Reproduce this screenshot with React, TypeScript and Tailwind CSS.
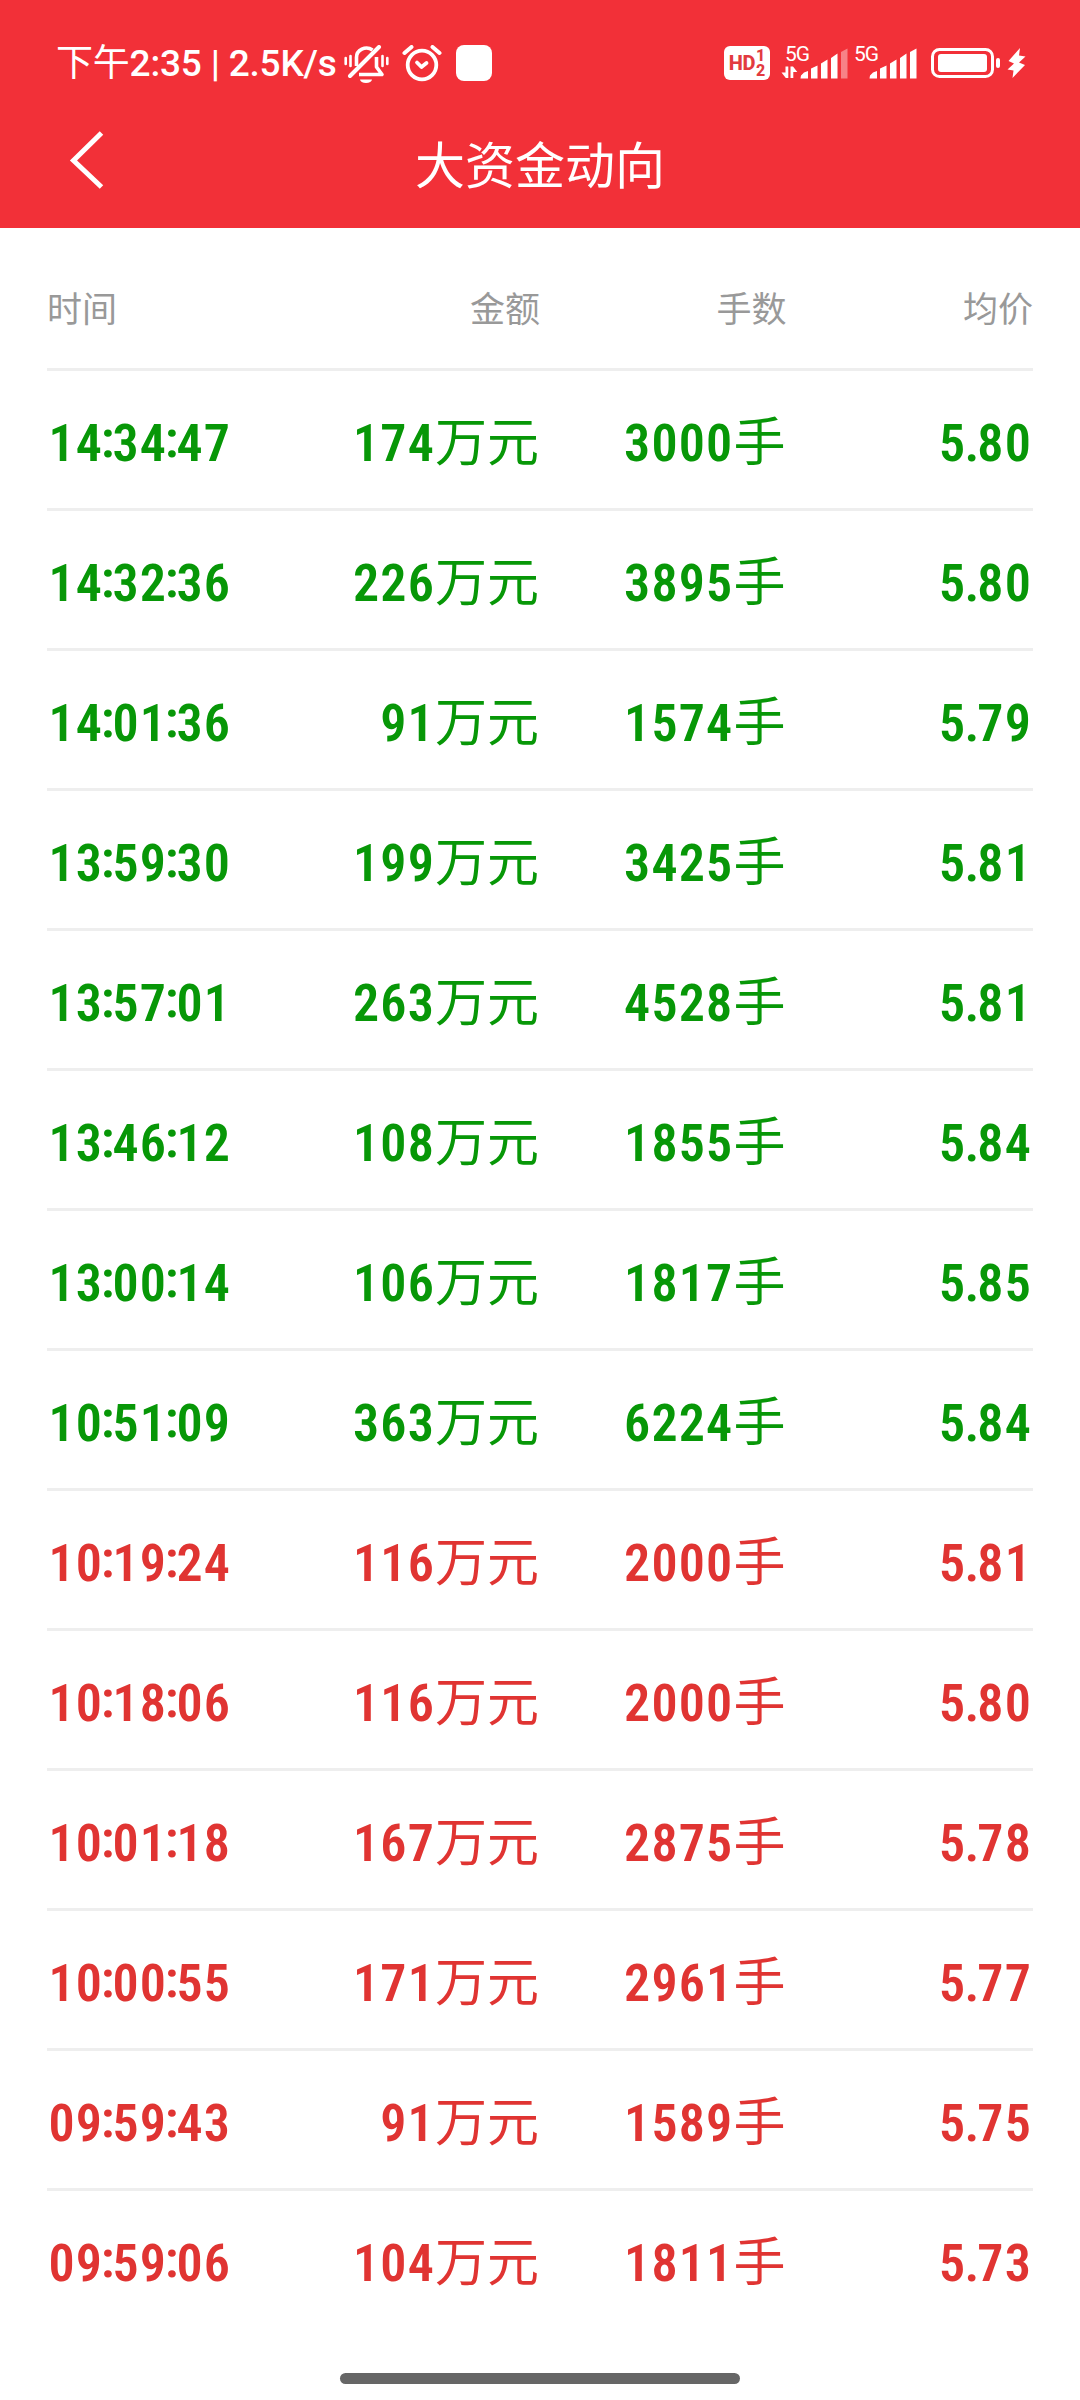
import clsx from "clsx";

interface Trade {
  time: string;
  amount: number;
  lots: number;
  price: string;
  side: "buy" | "sell";
}

const TRADES: Trade[] = [
  { time: "14:34:47", amount: 174, lots: 3000, price: "5.80", side: "sell" },
  { time: "14:32:36", amount: 226, lots: 3895, price: "5.80", side: "sell" },
  { time: "14:01:36", amount: 91, lots: 1574, price: "5.79", side: "sell" },
  { time: "13:59:30", amount: 199, lots: 3425, price: "5.81", side: "sell" },
  { time: "13:57:01", amount: 263, lots: 4528, price: "5.81", side: "sell" },
  { time: "13:46:12", amount: 108, lots: 1855, price: "5.84", side: "sell" },
  { time: "13:00:14", amount: 106, lots: 1817, price: "5.85", side: "sell" },
  { time: "10:51:09", amount: 363, lots: 6224, price: "5.84", side: "sell" },
  { time: "10:19:24", amount: 116, lots: 2000, price: "5.81", side: "buy" },
  { time: "10:18:06", amount: 116, lots: 2000, price: "5.80", side: "buy" },
  { time: "10:01:18", amount: 167, lots: 2875, price: "5.78", side: "buy" },
  { time: "10:00:55", amount: 171, lots: 2961, price: "5.77", side: "buy" },
  { time: "09:59:43", amount: 91, lots: 1589, price: "5.75", side: "buy" },
  { time: "09:59:06", amount: 104, lots: 1811, price: "5.73", side: "buy" },
];

const COLUMNS = ["时间", "金额", "手数", "均价"];

function MutedBellIcon() {
  return (
    <svg width="45" height="39" viewBox="0 0 45 39" fill="none" stroke="#fff" strokeWidth="3.6">
      <path d="M12.500 21V13a10 9.500 0 0 1 16-8" />
      <path d="M32.500 12v10l5.500 7.500H15" strokeLinejoin="round" />
      <path d="M6 31 35 2" strokeLinecap="round" strokeWidth="4" />
      <path d="M16 34.500h12a6 3.500 0 0 1-12 0Z" fill="#fff" stroke="none" />
      <path d="M1.700 13v6M6.500 11v10M38.500 11v10M43.300 13v6" strokeWidth="2.600" strokeLinecap="round" />
    </svg>
  );
}

function AlarmIcon() {
  return (
    <svg width="40" height="37" viewBox="0 0 40 37" fill="none" stroke="#fff" strokeLinecap="round">
      <circle cx="20" cy="20" r="14.300" strokeWidth="3.800" />
      <path d="m2.500 8 7-6M37.500 8l-7-6" strokeWidth="4" />
      <path d="m15 17.500 4.500 4.500 5-4" strokeWidth="3.800" strokeLinejoin="round" />
    </svg>
  );
}

function HdBadge() {
  return (
    <div className="flex h-[34px] w-[46px] items-center justify-center gap-px rounded-[6px] bg-white font-['Roboto',sans-serif] font-extrabold text-[#e23a40]">
      <span className="text-[20px] leading-none tracking-[-0.5px]">HD</span>
      <span className="flex flex-col text-[16px] leading-[15px]">
        <span>1</span>
        <span>2</span>
      </span>
    </div>
  );
}

function Signal({ weak = false, transfer = false }: { weak?: boolean; transfer?: boolean }) {
  return (
    <div className="flex h-[34px] w-[68px] flex-col text-white">
      <span className="h-[17px] pl-[4px] font-['Roboto',sans-serif] text-[21px] leading-[16px] tracking-[-1px]">
        5G
      </span>
      <svg className="-mt-[17px]" width="68" height="34" viewBox="0 0 68 34" fill="#fff">
        {transfer && (
          <path d="M4.500 20.500h2.800V32H4.800L.500 26.500h4ZM9.500 32V20.500h2.500l4.300 5.500h-4V32Z" />
        )}
        <path d="M20 29.500 23 26.500l4-1.500v7.500h-7.500ZM30 22.500l6.500-3v13H30ZM40 17.500l6.500-4v19H40ZM50 12l6.500-4.500v25H50Z" />
        <path d="m60 6 6.500-3.500v30H60Z" opacity={weak ? 0.4 : 1} />
      </svg>
    </div>
  );
}

function Battery() {
  return (
    <svg width="69" height="30" viewBox="0 0 69 30">
      <rect x="1.500" y="1.500" width="60" height="27" rx="7" fill="none" stroke="#fff" strokeWidth="3" />
      <rect x="7" y="6" width="49" height="18" rx="3" fill="#fff" />
      <rect x="65" y="10" width="4" height="10" rx="2" fill="#fff" />
    </svg>
  );
}

function StatusBar() {
  return (
    <div className="flex h-[92px] justify-between pr-[54px] pl-[56px] text-white">
      <div className="flex pt-[42px]">
        <span className="w-[281px] whitespace-pre font-['Roboto','Noto_Sans_CJK_SC',sans-serif] text-[37px] leading-[44px] font-medium tracking-[-0.2px]">
          <span className="font-normal">下午</span>2:35 | 2.5K/s
        </span>
        <div className="ml-[7px] flex gap-[13px] pt-[3px]">
          <MutedBellIcon />
          <AlarmIcon />
          <span className="ml-px size-[36px] rounded-[8px] bg-white" />
        </div>
      </div>
      <div className="flex pt-[46px]">
        <HdBadge />
        <div className="ml-[11px] flex gap-[1px]">
          <Signal weak transfer />
          <Signal />
        </div>
        <div className="ml-[13px] flex gap-[7px] pt-[2px]">
          <Battery />
          <svg width="19" height="30" viewBox="0 0 19 30" fill="#fff">
            <path d="M13 0 1.500 13 7 15.500 .500 21.500 6.500 22.500 5.500 30 18 17 12 14.500 18.500 8.500 12 7.500Z" />
          </svg>
        </div>
      </div>
    </div>
  );
}

function TitleBar() {
  return (
    <div className="grid h-[136px] grid-cols-[1fr_auto_1fr] text-white">
      <svg className="mt-[38px] ml-[69px]" width="36" height="60" viewBox="0 0 36 60" fill="none" stroke="#fff" strokeWidth="5">
        <path d="M32.500 3 4.500 30.500 32.500 57" />
      </svg>
      <h1 className="pt-[34px] text-[50px] leading-[72px]">大资金动向</h1>
    </div>
  );
}

function Num({ children }: { children: string | number }) {
  return (
    <span className="font-['Roboto',sans-serif] text-[52px] font-semibold tracking-[1.2px] [font-stretch:85%]">
      {String(children)
        .split(/([:.])/)
        .map((part, i) => {
          if (part === ":")
            return (
              <span key={i} className="mr-[-2px] ml-[-2.5px] align-[4px] tracking-normal">
                :
              </span>
            );
          if (part === ".")
            return (
              <span key={i} className="-mx-[2px] tracking-normal">
                .
              </span>
            );
          return part;
        })}
    </span>
  );
}

function TradeRow({ trade }: { trade: Trade }) {
  return (
    <div
      className={clsx(
        "grid h-[140px] grid-cols-4 border-b-[3px] border-[#eee] pt-[30px] text-right text-[52px] leading-[76px] whitespace-nowrap last:border-b-0",
        trade.side === "sell" ? "text-[#079707]" : "text-[#e03432]",
      )}
    >
      <span className="pl-[1.5px] text-left">
        <Num>{trade.time}</Num>
      </span>
      <span className="pr-px">
        <Num>{trade.amount}</Num>万元
      </span>
      <span className="pr-px">
        <Num>{trade.lots}</Num>手
      </span>
      <span className="pr-px">
        <Num>{trade.price}</Num>
      </span>
    </div>
  );
}

export default function App() {
  return (
    <div className="flex h-[2400px] w-[1080px] flex-col bg-white font-['Noto_Sans_CJK_SC',sans-serif]">
      <header className="bg-[#f23038]">
        <StatusBar />
        <TitleBar />
      </header>
      <main className="flex-1 px-[47px]">
        <div className="grid h-[143px] grid-cols-4 border-b-[3px] border-[#eee] pt-[53px] text-right text-[35px] leading-[52px] text-[#999]">
          {COLUMNS.map((name) => (
            <span key={name} className="first:text-left">
              {name}
            </span>
          ))}
        </div>
        <div>
          {TRADES.map((trade) => (
            <TradeRow key={trade.time} trade={trade} />
          ))}
        </div>
      </main>
      <footer className="flex justify-center pb-[16px]">
        <div className="h-[11px] w-[400px] rounded-full bg-[#666]" />
      </footer>
    </div>
  );
}
